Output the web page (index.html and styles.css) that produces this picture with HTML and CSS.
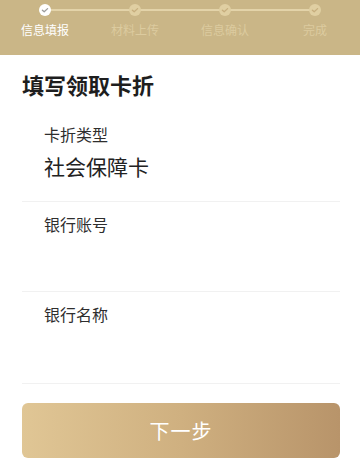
FILE: index.html
```html
<!DOCTYPE html>
<html lang="zh-CN">
<head>
<meta charset="utf-8">
<link rel="stylesheet" href="styles.css">
</head>
<body>
<div class="steps">
  <div class="step active">
    <span class="dot"><svg viewBox="0 0 12 12" width="12" height="12"><polyline points="3.4,6.2 5.2,7.8 8.6,4.6" fill="none" stroke="#9c9c9c" stroke-width="1.3" stroke-linecap="round" stroke-linejoin="round"/></svg></span>
    <span class="label">信息填报</span>
  </div>
  <div class="step">
    <span class="dot"><svg viewBox="0 0 12 12" width="12" height="12"><polyline points="3.4,6.2 5.2,7.8 8.6,4.6" fill="none" stroke="#c6ae7e" stroke-width="1.3" stroke-linecap="round" stroke-linejoin="round"/></svg></span>
    <span class="label">材料上传</span>
  </div>
  <div class="step">
    <span class="dot"><svg viewBox="0 0 12 12" width="12" height="12"><polyline points="3.4,6.2 5.2,7.8 8.6,4.6" fill="none" stroke="#c6ae7e" stroke-width="1.3" stroke-linecap="round" stroke-linejoin="round"/></svg></span>
    <span class="label">信息确认</span>
  </div>
  <div class="step">
    <span class="dot"><svg viewBox="0 0 12 12" width="12" height="12"><polyline points="3.4,6.2 5.2,7.8 8.6,4.6" fill="none" stroke="#c6ae7e" stroke-width="1.3" stroke-linecap="round" stroke-linejoin="round"/></svg></span>
    <span class="label">完成</span>
  </div>
</div>
<main class="content">
  <h1 class="title">填写领取卡折</h1>
  <div class="form">
    <div class="row">
      <div class="row-label">卡折类型</div>
      <div class="row-value">社会保障卡</div>
    </div>
    <div class="row">
      <div class="row-label">银行账号</div>
      <div class="row-value"></div>
    </div>
    <div class="row tall">
      <div class="row-label">银行名称</div>
      <div class="row-value"></div>
    </div>
  </div>
  <button class="next">下一步</button>
</main>
</body>
</html>
```
FILE: styles.css
```css
* { box-sizing: border-box; }
html, body {
  margin: 0;
  padding: 0;
  background: #ffffff;
  font-family: "Noto Sans CJK SC", "Noto Sans", sans-serif;
}
.steps {
  height: 55px;
  background: #cab687;
  display: grid;
  grid-template-columns: repeat(4, 90px);
}
.step {
  position: relative;
  display: flex;
  flex-direction: column;
  align-items: center;
}
.step::before, .step::after {
  content: "";
  position: absolute;
  top: 9px;
  height: 2px;
  background: #e3d3a9;
}
.step::before { left: 0; right: 50%; }
.step::after { left: 50%; right: 0; }
.step:first-child::before, .step:last-child::after { display: none; }
.dot {
  position: relative;
  z-index: 1;
  margin-top: 4px;
  width: 12px;
  height: 12px;
  border-radius: 50%;
  background: #e0cfa2;
  display: flex;
}
.step.active .dot { background: #ffffff; }
.label {
  margin-top: 6px;
  font-size: 12px;
  line-height: 16px;
  color: #dccb9f;
}
.step.active .label { color: #ffffff; }
.content {
  padding: 0 20px 0 22px;
}
.title {
  margin: 14px 0 0;
  font-size: 22px;
  line-height: 30px;
  font-weight: 700;
  color: #1e1e1e;
}
.form {
  margin-top: 13px;
}
.row {
  height: 90px;
  padding-left: 22px;
  padding-top: 10px;
  border-bottom: 1px solid #f1f1f1;
}
.row.tall { height: 92px; }
.row-label {
  font-size: 16px;
  line-height: 24px;
  color: #2e2e2e;
}
.row-value {
  margin-top: 4px;
  font-size: 21px;
  line-height: 32px;
  color: #222222;
}
.next {
  display: block;
  width: 100%;
  margin-top: 19px;
  height: 55px;
  border: none;
  border-radius: 6px;
  background: linear-gradient(90deg, #e0c695 0%, #cfb080 50%, #b8946a 100%);
  color: #ffffff;
  font-family: "Noto Sans CJK SC", "Noto Sans", sans-serif;
  font-size: 20px;
  letter-spacing: 1px;
}
```
